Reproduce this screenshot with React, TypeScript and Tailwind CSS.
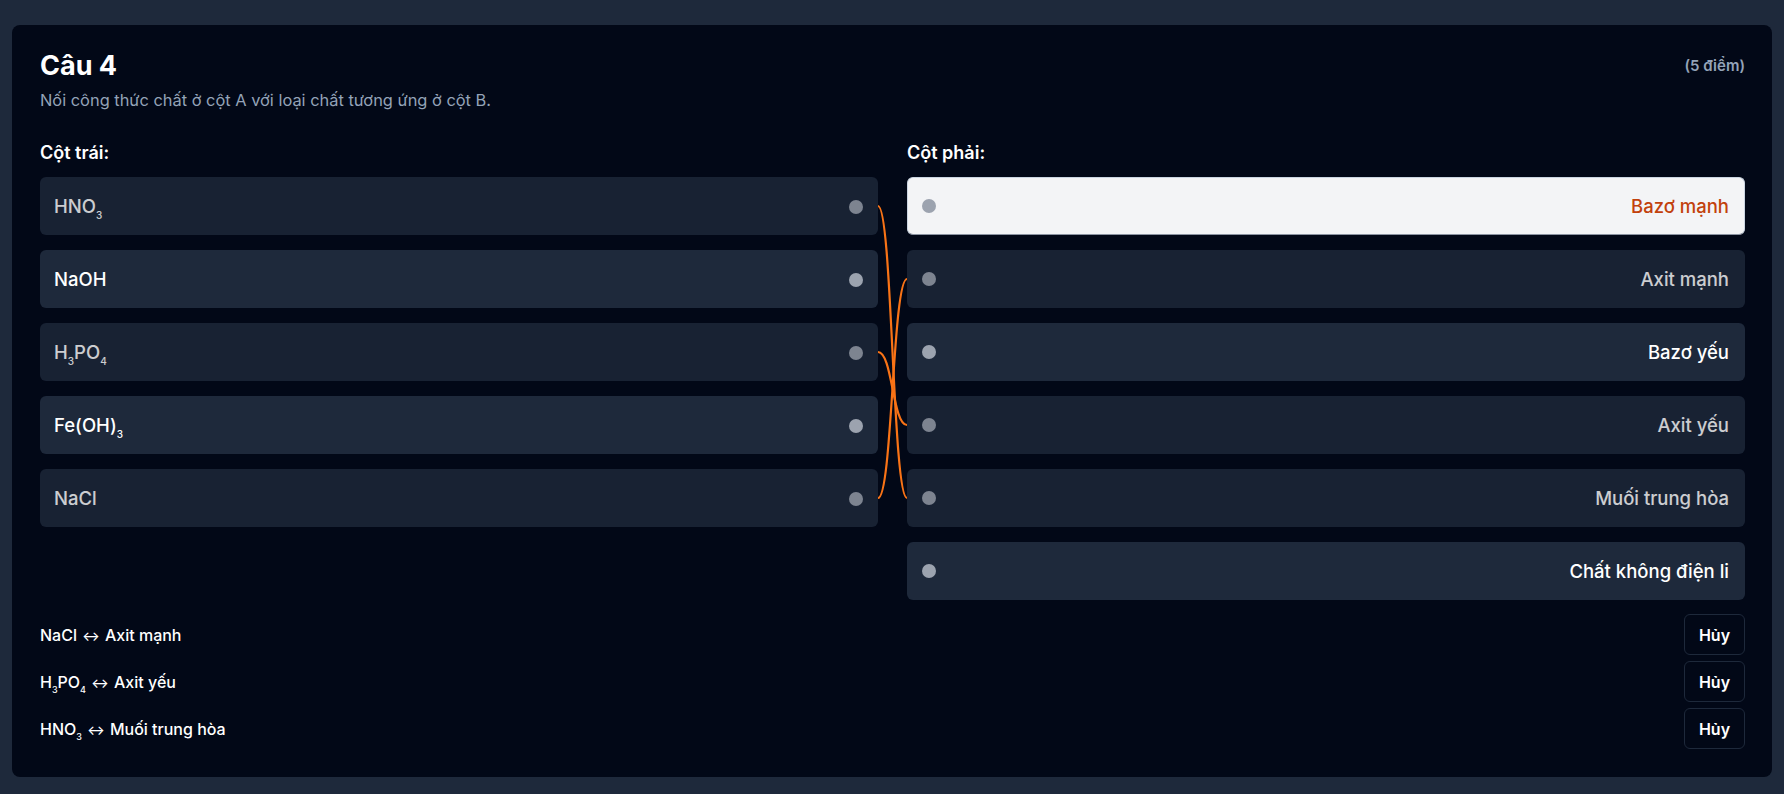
import type { ReactNode } from "react";

type Item = { label: ReactNode; matched?: boolean; selected?: boolean };

const S = ({ children }: { children: ReactNode }) => (
  <sub className="text-[10px] bottom-[-6px]">{children}</sub>
);
const SmallS = ({ children }: { children: ReactNode }) => (
  <sub className="text-[9px] bottom-[-5px]">{children}</sub>
);
const Arrow = () => <span className="text-[13px] mx-[1px]">↔</span>;

const left: Item[] = [
  { label: <>HNO<S>3</S></>, matched: true },
  { label: "NaOH" },
  { label: <>H<S>3</S>PO<S>4</S></>, matched: true },
  { label: <>Fe(OH)<S>3</S></> },
  { label: "NaCl", matched: true },
];

const right: Item[] = [
  { label: "Bazơ mạnh", selected: true },
  { label: "Axit mạnh", matched: true },
  { label: "Bazơ yếu" },
  { label: "Axit yếu", matched: true },
  { label: "Muối trung hòa", matched: true },
  { label: "Chất không điện li" },
];

// cặp đã nối: [chỉ số trái, chỉ số phải]
const links: [number, number][] = [
  [4, 1],
  [2, 3],
  [0, 4],
];

const pairs: ReactNode[] = [
  <>NaCl <Arrow /> Axit mạnh</>,
  <>H<SmallS>3</SmallS>PO<SmallS>4</SmallS> <Arrow /> Axit yếu</>,
  <>HNO<SmallS>3</SmallS> <Arrow /> Muối trung hòa</>,
];

const rowY = (i: number) => 67 + 73 * i;

function Dot() {
  return <span className="block w-[14px] h-[14px] rounded-full bg-[#9ca3af]" />;
}

export default function App() {
  return (
    <div
      className="min-h-screen bg-[#1e293b] px-[12px] pt-[25px] pb-[17px]"
      style={{ fontFamily: "Inter, 'Noto Sans', sans-serif" }}
    >
      <div className="bg-[#020817] rounded-lg pl-[28px] pr-[27px] pt-[25px] pb-[28px]">
        {/* tiêu đề */}
        <div className="flex items-start justify-between">
          <div>
            <h2 className="text-[27px] leading-[32px] font-bold text-white">Câu 4</h2>
            <p className="mt-[6px] text-[16.4px] leading-[24px] text-[#94a3b8]">
              Nối công thức chất ở cột A với loại chất tương ứng ở cột B.
            </p>
          </div>
          <span className="text-[15px] leading-[32px] font-semibold text-[#94a3b8]">(5 điểm)</span>
        </div>

        {/* hai cột */}
        <div className="relative mt-[27px] grid grid-cols-2 gap-x-[29px]">
          <div>
            <h3 className="text-[18px] leading-[28px] font-semibold text-white mb-[10px]">Cột trái:</h3>
            <div className="flex flex-col gap-[15px]">
              {left.map((it, i) => (
                <div
                  key={i}
                  className={
                    "h-[58px] rounded-md bg-[#1e293b] flex items-center justify-between pl-[14px] pr-[15px] pt-[2px] text-[18.5px] font-medium text-white " +
                    (it.matched ? "opacity-80" : "")
                  }
                >
                  <span>{it.label}</span>
                  <Dot />
                </div>
              ))}
            </div>
          </div>
          <div>
            <h3 className="text-[18px] leading-[28px] font-semibold text-white mb-[10px]">Cột phải:</h3>
            <div className="flex flex-col gap-[15px]">
              {right.map((it, i) =>
                it.selected ? (
                  <div
                    key={i}
                    className="h-[58px] rounded-md bg-[#f3f4f6] border border-[#cbd5e1] border-b-[#8b93a1] flex items-center justify-between pl-[14px] pr-[15px] text-[18.5px] font-medium text-[#c2410c]"
                  >
                    <Dot />
                    <span className="pt-[2px]">{it.label}</span>
                  </div>
                ) : (
                  <div
                    key={i}
                    className={
                      "h-[58px] rounded-md bg-[#1e293b] flex items-center justify-between pl-[15px] pr-[16px] text-[18.5px] font-medium text-white " +
                      (it.matched ? "opacity-80" : "")
                    }
                  >
                    <Dot />
                    <span className="pt-[2px]">{it.label}</span>
                  </div>
                )
              )}
            </div>
          </div>

          {/* đường nối */}
          <svg className="absolute inset-0 w-full h-full pointer-events-none overflow-visible" fill="none">
            {links.map(([a, b], k) => {
              const y1 = rowY(a);
              const y2 = rowY(b);
              return (
                <path
                  key={k}
                  d={`M 838 ${y1} C 852.5 ${y1}, 852.5 ${y2}, 867 ${y2}`}
                  stroke="#f97316"
                  strokeWidth={2.2}
                />
              );
            })}
          </svg>
        </div>

        {/* danh sách đã nối */}
        <div className="mt-[14px] flex flex-col gap-[6px]">
          {pairs.map((p, i) => (
            <div key={i} className="flex items-center justify-between">
              <span className="text-[16px] font-medium text-white">{p}</span>
              <button className="w-[61px] h-[41px] rounded-md border border-[#1e293b] bg-[#020817] text-[16px] font-semibold text-white">
                Hủy
              </button>
            </div>
          ))}
        </div>
      </div>
    </div>
  );
}
